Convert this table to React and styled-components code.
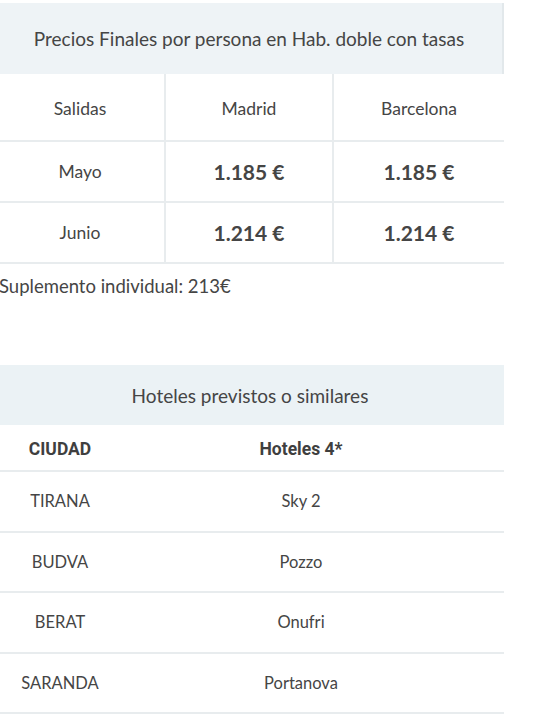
import React from "react";
import styled, { createGlobalStyle } from "styled-components";

const GlobalStyle = createGlobalStyle`
  body {
    margin: 0;
    background: #fff;
    font-family: Lato, "Open Sans", sans-serif;
    color: #454545;
  }
`;

const Page = styled.div`
  width: 508px;
  margin-left: -4px;
  padding-top: 3px;
`;

const Table = styled.div`
  display: grid;
  grid-template-columns: ${({ cols }) => cols};
`;

const Title = styled.div`
  grid-column: 1 / -1;
  height: ${({ h }) => h}px;
  display: flex;
  align-items: center;
  justify-content: center;
  background: ${({ bg }) => bg};
  border-right: ${({ edge }) => (edge ? "2px solid #e2e8eb" : "none")};
  font-size: 19px;
  color: #454545;
`;

const Cell = styled.div`
  height: ${({ h }) => h}px;
  display: flex;
  align-items: center;
  justify-content: center;
  box-sizing: border-box;
  padding-top: ${({ pt }) => pt || 0}px;
  border-bottom: 2px solid #e8ecee;
  border-right: ${({ divider }) => (divider ? "2px solid #e8ecee" : "none")};
  font-size: ${({ size }) => size || 17.5}px;
  font-weight: ${({ bold }) => (bold ? 700 : 400)};
  color: #454545;
`;

const HeadCell = styled(Cell)`
  font-family: Roboto, "Liberation Sans", sans-serif;
  font-weight: 700;
  font-size: 17.5px;
  color: #3f3f3f;
  padding-top: 3px;
`;

const Note = styled.p`
  margin: 11px 0 0 3px;
  font-size: 18.5px;
  color: #454545;
`;

const Spacer = styled.div`
  height: 68px;
`;

const prices = [
  { month: "Mayo", madrid: "1.185 €", bcn: "1.185 €" },
  { month: "Junio", madrid: "1.214 €", bcn: "1.214 €" },
];

const hotels = [
  { city: "TIRANA", hotel: "Sky 2" },
  { city: "BUDVA", hotel: "Pozzo" },
  { city: "BERAT", hotel: "Onufri" },
  { city: "SARANDA", hotel: "Portanova" },
];

export default function App() {
  return (
    <Page>
      <GlobalStyle />
      <Table cols="170px 168px 170px">
        <Title h={71} bg="#eef3f6" edge>
          Precios Finales por persona en Hab. doble con tasas
        </Title>
        <Cell h={68} pt={3} divider>Salidas</Cell>
        <Cell h={68} pt={3} divider>Madrid</Cell>
        <Cell h={68} pt={3}>Barcelona</Cell>
        {prices.map((p) => (
          <React.Fragment key={p.month}>
            <Cell h={61} divider>{p.month}</Cell>
            <Cell h={61} divider bold size={21}>{p.madrid}</Cell>
            <Cell h={61} bold size={21}>{p.bcn}</Cell>
          </React.Fragment>
        ))}
      </Table>
      <Note>Suplemento individual: 213€</Note>
      <Spacer />
      <Table cols="128px 354px 1fr">
        <Title h={60} bg="#ebf2f5">Hoteles previstos o similares</Title>
        <HeadCell h={47}>CIUDAD</HeadCell>
        <HeadCell h={47}>Hoteles 4*</HeadCell>
        <HeadCell h={47} />
        {hotels.map((r) => (
          <React.Fragment key={r.city}>
            <Cell h={60.5} size={16.5}>{r.city}</Cell>
            <Cell h={60.5} size={16.5}>{r.hotel}</Cell>
            <Cell h={60.5} />
          </React.Fragment>
        ))}
      </Table>
    </Page>
  );
}
